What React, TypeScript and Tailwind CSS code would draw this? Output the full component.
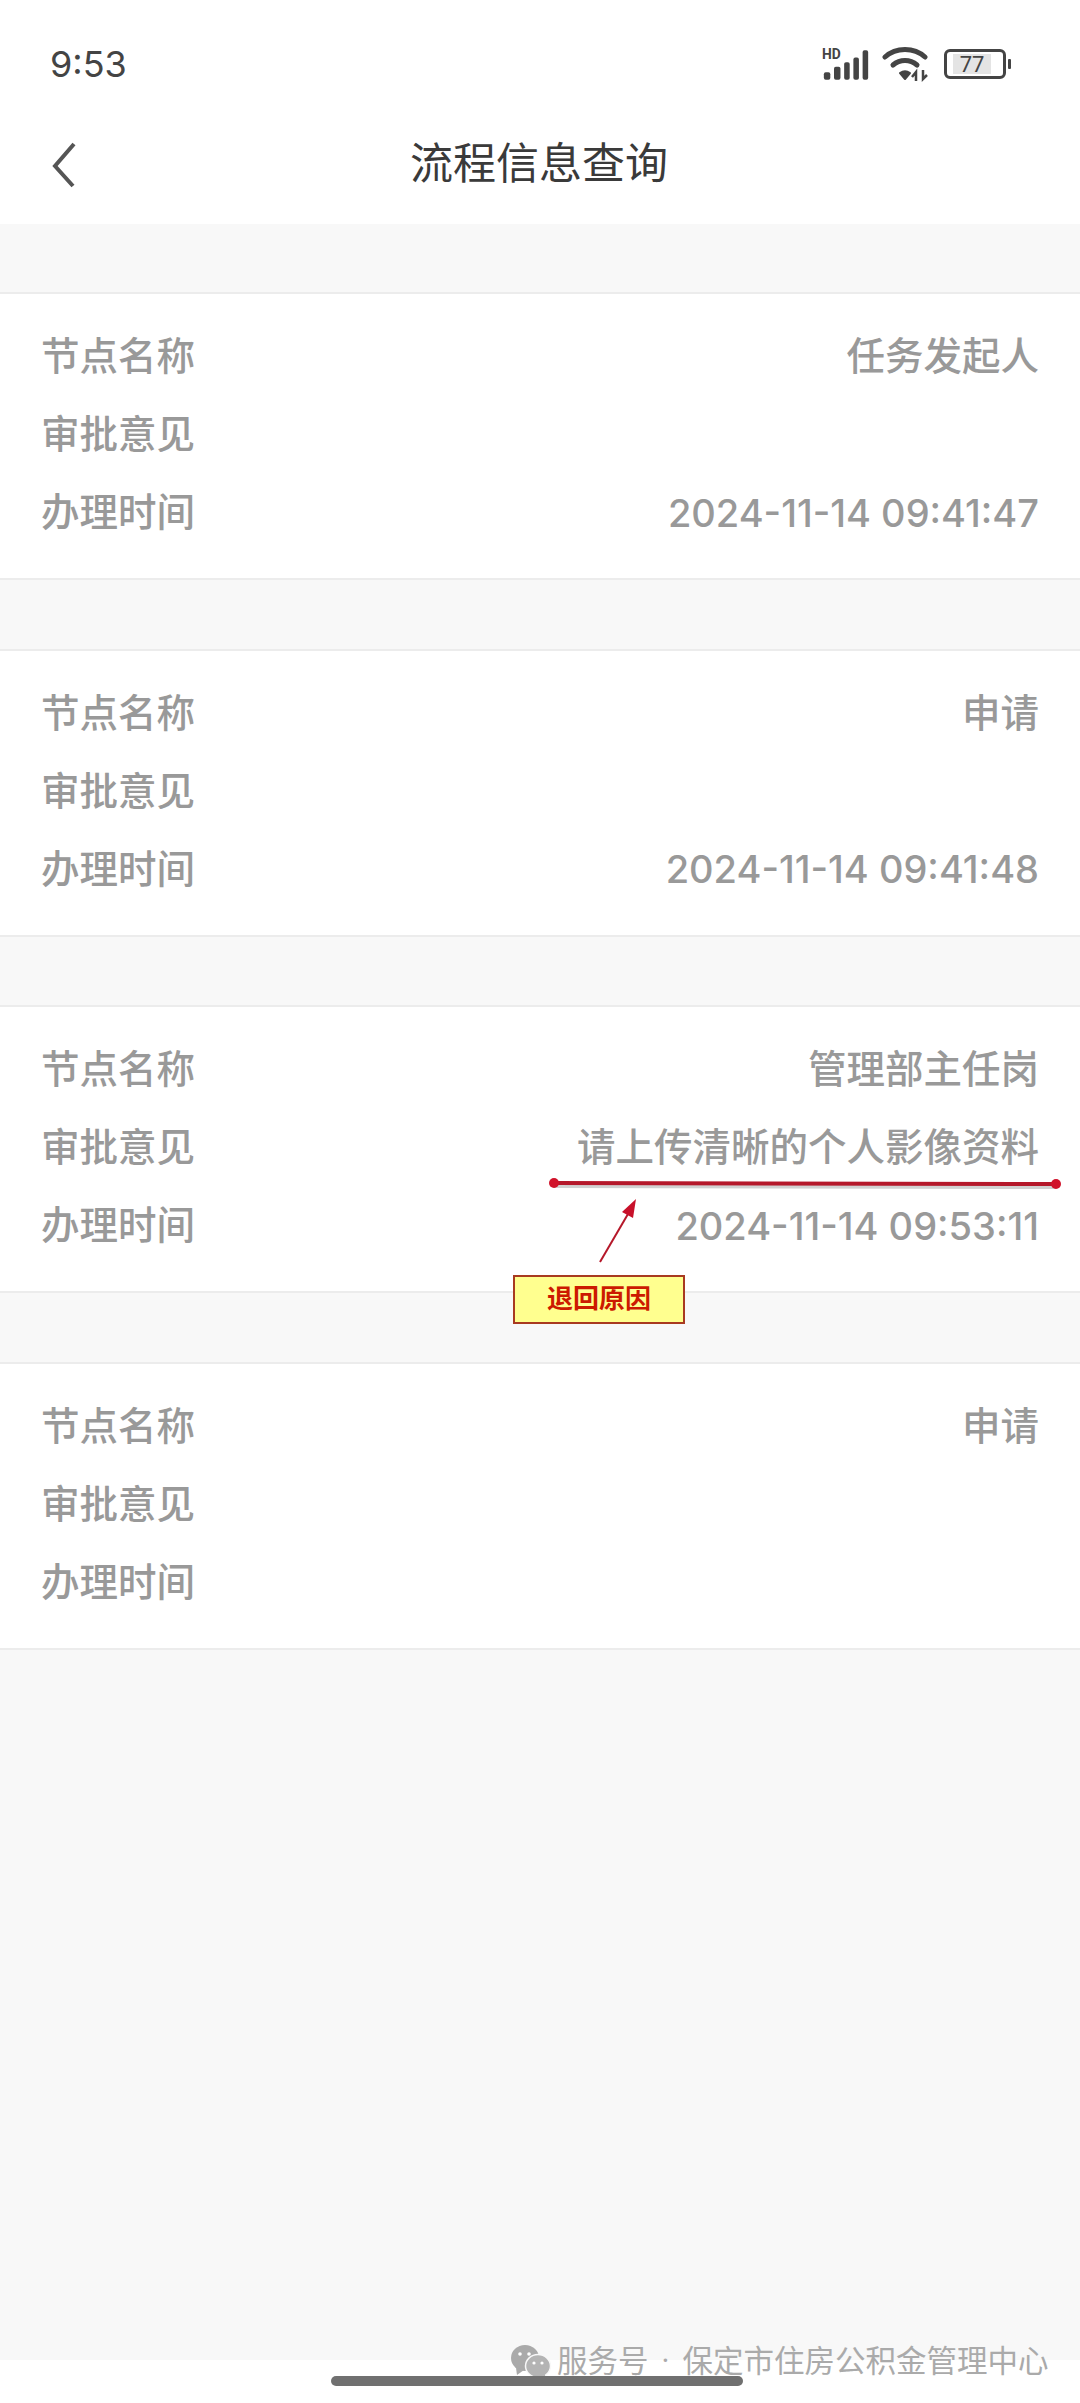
const FONT = "font-['Roboto','Noto_Sans_CJK_SC',sans-serif]";
const DIGITS = "font-['Inter','Noto_Sans_CJK_SC',sans-serif]";

function Row({ label, value }: { label: string; value?: string }) {
  const isDate = value?.startsWith("2024");
  return (
    <div className="flex h-[78px] items-center justify-between">
      <span>{label}</span>
      <span className={isDate ? `${DIGITS} text-[38px]` : ""}>{value}</span>
    </div>
  );
}

function Card({ rows }: { rows: [string, string?][] }) {
  return (
    <div className="mt-[68.5px] h-[288px] border-y-2 border-[#ececec] bg-white px-[41px] pt-[24px] text-[38.5px] font-medium text-[#999999] first:mt-[68px]">
      {rows.map(([l, v]) => (
        <Row key={l} label={l} value={v} />
      ))}
    </div>
  );
}

function StatusIcons() {
  return (
    <div className="flex items-center">
      <svg width="48" height="36" viewBox="0 0 52 36">
        <text x="0" y="13" fontSize="15" fontWeight="700" fontFamily="Roboto" fill="#444">HD</text>
        <rect x="2" y="27" width="7" height="8" rx="2" fill="#444" />
        <rect x="13" y="21" width="7" height="14" rx="2" fill="#444" />
        <rect x="24" y="16" width="6" height="19" rx="2" fill="#444" />
        <rect x="34" y="11" width="6" height="24" rx="2" fill="#444" />
        <rect x="44" y="3" width="6" height="32" rx="2" fill="#444" />
      </svg>
      <svg width="48" height="36" viewBox="0 0 48 36" className="ml-[12px]">
        <path d="M3 11 C14 1 32 1 43 11" fill="none" stroke="#444" strokeWidth="5" strokeLinecap="round" />
        <path d="M11 19 C18 13 28 13 35 19" fill="none" stroke="#444" strokeWidth="5" strokeLinecap="round" />
        <path d="M18 27 C21 25 25 25 28 27 L23 33 Z" fill="#444" stroke="#444" strokeWidth="2" strokeLinejoin="round" />
        <path d="M34 35 V26 L30 31 M41 24 V33 L45 29" fill="none" stroke="#444" strokeWidth="2.5" />
      </svg>
      <div className="ml-[14px] flex h-[30px] w-[62px] items-center rounded-[6px] border-[3px] border-[#444] pl-[6px]">
        <div className="flex h-[20px] w-[38px] items-center justify-center bg-[#e4e4e4] font-['Roboto',sans-serif] text-[22px] text-[#444]">
          77
        </div>
      </div>
      <div className="ml-[2px] h-[10px] w-[3px] rounded-[1px] bg-[#444]" />
    </div>
  );
}

export default function App() {
  return (
    <div className={`relative h-[2403px] w-[1080px] overflow-hidden bg-white ${FONT}`}>
      <div className="flex h-[224px] flex-col bg-white">
        <div className="flex h-[88px] items-end justify-between pl-[50px] pr-[69px] pb-[2px]">
          <span className="font-['Inter',sans-serif] text-[36px] leading-[44px] text-[#444]">9:53</span>
          <div className="mb-[4px]">
            <StatusIcons />
          </div>
        </div>
        <div className="relative flex flex-1 items-center justify-center pt-[16px]">
          <svg width="26" height="46" viewBox="0 0 26 46" className="absolute left-[51px] top-[54px]">
            <path d="M23 2 L4 24 L22 44" fill="none" stroke="#555" strokeWidth="4" />
          </svg>
          <span className="mr-[2px] text-[43px] text-[#3a3a3a]">流程信息查询</span>
        </div>
      </div>
      <div className="h-[2136px] overflow-hidden bg-[#f8f8f8]">
        <Card rows={[["节点名称", "任务发起人"], ["审批意见"], ["办理时间", "2024-11-14 09:41:47"]]} />
        <Card rows={[["节点名称", "申请"], ["审批意见"], ["办理时间", "2024-11-14 09:41:48"]]} />
        <Card rows={[["节点名称", "管理部主任岗"], ["审批意见", "请上传清晰的个人影像资料"], ["办理时间", "2024-11-14 09:53:11"]]} />
        <Card rows={[["节点名称", "申请"], ["审批意见"], ["办理时间"]]} />
      </div>

      {/* annotation */}
      <svg width="1080" height="140" viewBox="0 1170 1080 140" className="absolute left-0 top-[1170px]">
        <line x1="554" y1="1186" x2="1056" y2="1187" stroke="#000" strokeOpacity="0.18" strokeWidth="4" />
        <line x1="554" y1="1183" x2="1056" y2="1184" stroke="#b5182a" strokeWidth="4" />
        <circle cx="554" cy="1183" r="5" fill="#d0122a" />
        <circle cx="1056" cy="1184" r="5" fill="#d0122a" />
        <line x1="600" y1="1262" x2="628" y2="1214" stroke="#b5182a" strokeWidth="2" />
        <polygon points="636,1199 622,1212 633,1218" fill="#c8102a" />
      </svg>
      <div className="absolute left-[513px] top-[1275px] flex h-[49px] w-[172px] items-center justify-center border-2 border-[#a83a20] bg-[#ffff8f] text-[26px] font-bold text-[#cc1a00]">
        退回原因
      </div>

      {/* watermark */}
      <div className="absolute left-[510px] top-[2339px] flex items-center">
        <svg width="42" height="36" viewBox="0 0 42 36">
          <ellipse cx="15" cy="14" rx="14" ry="13" fill="#aaaaaa" />
          <path d="M6 24 L7 31 L14 26 Z" fill="#aaaaaa" />
          <ellipse cx="28" cy="22" rx="12.5" ry="11.5" fill="#b4b4b4" stroke="#f8f8f8" strokeWidth="1.5" />
          <path d="M32 32 L35 36 L35 30 Z" fill="#b4b4b4" />
          <circle cx="10" cy="10" r="1.8" fill="#fff" />
          <circle cx="19" cy="10" r="1.8" fill="#fff" />
          <circle cx="24" cy="19" r="1.6" fill="#fff" />
          <circle cx="32" cy="19" r="1.6" fill="#fff" />
        </svg>
        <span className="ml-[5px] whitespace-nowrap text-[30.5px] text-[#aaaaaa]">服务号<span className="mx-[13px]">·</span>保定市住房公积金管理中心</span>
      </div>

      {/* home indicator */}
      <div className="absolute left-[331px] top-[2376px] h-[10px] w-[412px] rounded-full bg-[#707070]" />
    </div>
  );
}
